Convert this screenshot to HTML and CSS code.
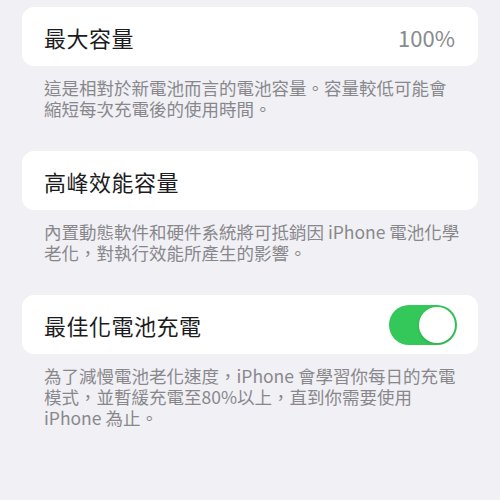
FILE: index.html
```html
<!DOCTYPE html>
<html lang="zh-Hant">
<head>
    <meta charset="UTF-8">
    <title>電池健康度與充電</title>
    <meta name="viewport" content="width=device-width, initial-scale=1.0">
    <link rel="stylesheet" href="styles.css">
</head>
<body>

    <div class="group">
        <div class="cell">
            <span class="cell-title">最大容量</span>
            <span class="cell-value">100%</span>
        </div>
        <p class="footer">這是相對於新電池而言的電池容量。容量較低可能會<br>縮短每次充電後的使用時間。</p>
    </div>

    <div class="group">
        <div class="cell">
            <span class="cell-title">高峰效能容量</span>
        </div>
        <p class="footer">內置動態軟件和硬件系統將可抵銷因 iPhone 電池化學<br>老化，對執行效能所產生的影響。</p>
    </div>

    <div class="group">
        <div class="cell">
            <span class="cell-title">最佳化電池充電</span>
            <span class="switch on"><span class="knob"></span></span>
        </div>
        <p class="footer">為了減慢電池老化速度，iPhone 會學習你每日的充電<br>模式，並暫緩充電至80%以上，直到你需要使用<br>iPhone 為止。</p>
    </div>

</body>
</html>
```

FILE: styles.css
```css
* {
    box-sizing: border-box;
}

body {
    font-family: "Noto Sans CJK TC", "Noto Sans", sans-serif;
    background-color: #f1f0f5;
    margin: 0;
    padding: 7px 22px;
}

.group {
    margin-bottom: 32px;
}

.cell {
    display: flex;
    align-items: center;
    justify-content: space-between;
    height: 59px;
    padding: 0 21px 0 22px;
    background: #fff;
    border-radius: 12px;
}

.cell-title {
    font-size: 22px;
    letter-spacing: 0.5px;
    color: #1c1c1e;
}

.cell-value {
    font-size: 22px;
    color: #8a8a8e;
    margin-right: 2px;
}

.footer {
    margin: 11px 0 0;
    padding: 0 22px;
    font-size: 17.5px;
    line-height: 21px;
    white-space: nowrap;
    color: #88888c;
}

.switch {
    position: relative;
    width: 68px;
    height: 40px;
    border-radius: 20px;
    background-color: #e9e9eb;
}

.switch.on {
    background-color: #34c759;
}

.switch .knob {
    position: absolute;
    top: 2px;
    left: 2px;
    width: 36px;
    height: 36px;
    border-radius: 50%;
    background: #fff;
    box-shadow: 0 1px 3px rgba(0,0,0,0.15);
}

.switch.on .knob {
    left: 30px;
}
```
